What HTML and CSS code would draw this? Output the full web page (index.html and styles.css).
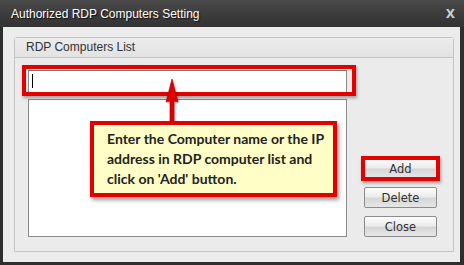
FILE: index.html
```html
<!DOCTYPE html>
<html lang="en">
<head>
    <meta charset="UTF-8">
    <title>Authorized RDP Computers Setting</title>
    <link rel="stylesheet" href="styles.css">
</head>
<body>
    <div class="window">
        <div class="titlebar">
            <span class="title">Authorized RDP Computers Setting</span>
            <span class="close-x">X</span>
        </div>
        <div class="client">
            <div class="group">
                <div class="group-header">RDP Computers List</div>
                <div class="group-body">
                    <div class="list-col">
                        <div class="text-input"><span class="caret"></span></div>
                        <div class="list-box"></div>
                    </div>
                    <div class="btn-col">
                        <button class="btn">Add</button>
                        <button class="btn">Delete</button>
                        <button class="btn">Close</button>
                    </div>
                </div>
            </div>

            <!-- annotations drawn over the dialog -->
            <div class="mark mark-input"></div>
            <div class="mark mark-add"></div>
            <svg class="arrow" width="16" height="44" viewBox="0 0 16 44">
                <path d="M8 0 L14 23 L10 22 L10 42 L6 42 L6 22 L2 23 Z" fill="#e00000" stroke="#b00000" stroke-width="0.6"/>
            </svg>
            <div class="callout">
                Enter the Computer name or the IP address in RDP computer list and click on 'Add' button.
            </div>
        </div>
    </div>
</body>
</html>
```

FILE: styles.css
```css
body {
    margin: 0;
    font-family: "DejaVu Sans", "Liberation Sans", sans-serif;
}
.window {
    width: 464px;
    height: 265px;
    box-sizing: border-box;
    background: #2e2e2e;
    padding: 0 4px 3px 3px;
    display: flex;
    flex-direction: column;
}
.titlebar {
    height: 27px;
    margin: 0 -4px 0 -3px;
    padding: 0 9px 0 11px;
    display: flex;
    align-items: center;
    justify-content: space-between;
    background: linear-gradient(#4a4a4a, #3a3a3a 60%, #333);
    color: #fff;
}
.title {
    font-family: "Liberation Sans", Arial, sans-serif;
    font-size: 12px;
    text-shadow: 1px 1px 1px #111;
}
.close-x {
    font-family: "DejaVu Sans", sans-serif;
    font-weight: bold;
    font-size: 12px;
    color: #cfcfcf;
}
.client {
    position: relative;
    flex: 1;
    background: #ececec;
    padding: 10px 7px 10px 11px;
    display: flex;
}
.group {
    flex: 1;
    border: 1px solid #c4c4c4;
    border-radius: 3px 3px 0 0;
    display: flex;
    flex-direction: column;
    background: #ebebeb;
}
.group-header {
    height: 19px;
    padding-left: 11px;
    line-height: 19px;
    font-family: "Liberation Sans", Arial, sans-serif;
    font-size: 12px;
    color: #333;
    background: linear-gradient(#ececec, #e2e2e2);
    border-bottom: 1px solid #c4c4c4;
}
.group-body {
    flex: 1;
    display: flex;
    padding: 12px 16px 14px 13px;
    gap: 17px;
}
.list-col {
    width: 319px;
    display: flex;
    flex-direction: column;
    gap: 6px;
}
.text-input {
    height: 23px;
    box-sizing: border-box;
    border: 1px solid #8a8a8a;
    border-top-color: #707070;
    background: #fff;
    padding: 3px 3px;
}
.caret {
    display: block;
    width: 1px;
    height: 14px;
    background: #000;
}
.list-box {
    flex: 1;
    border: 1px solid #8a8a8a;
    background: #fff;
}
.btn-col {
    width: 73px;
    display: flex;
    flex-direction: column;
    justify-content: flex-end;
    gap: 8px;
}
.btn {
    height: 21px;
    padding: 0;
    border: 1px solid #8c8c8c;
    border-radius: 2px;
    background: linear-gradient(#fdfdfd, #ececec 45%, #d6d6d6 55%, #e6e6e6);
    font-family: "DejaVu Sans", sans-serif;
    font-size: 11.5px;
    color: #333;
}
.mark {
    position: absolute;
    border: 4px solid #e20000;
    box-shadow: 1px 2px 3px rgba(0, 0, 0, 0.35);
}
.mark-input {
    left: 19px;
    top: 38px;
    width: 326px;
    height: 23px;
}
.mark-add {
    left: 358px;
    top: 129px;
    width: 71px;
    height: 17px;
}
.arrow {
    position: absolute;
    left: 161px;
    top: 52px;
    filter: drop-shadow(1px 1px 1px rgba(0, 0, 0, 0.35));
}
.callout {
    position: absolute;
    left: 87px;
    top: 94px;
    width: 218px;
    height: 59px;
    padding: 4px 8px 5px 13px;
    border: 4px solid #e20000;
    background: #fefec6;
    box-shadow: 2px 3px 4px rgba(0, 0, 0, 0.4);
    font-family: Lato, "Liberation Sans", sans-serif;
    font-weight: bold;
    font-size: 14px;
    line-height: 20px;
    color: #222;
}
```
